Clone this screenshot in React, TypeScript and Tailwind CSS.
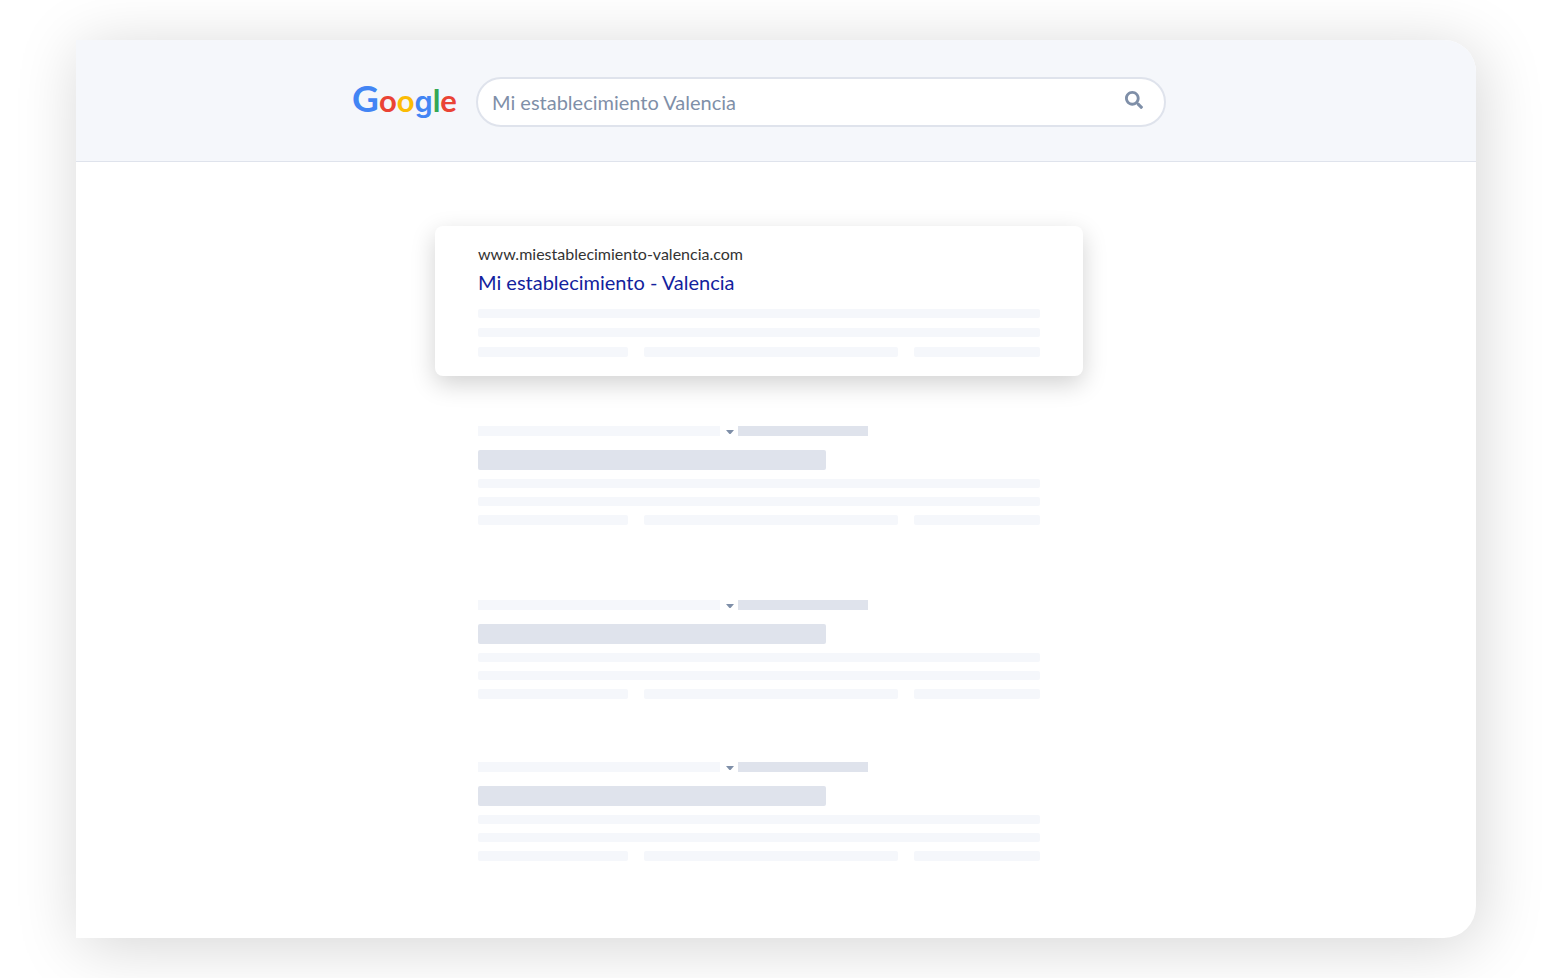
import React from "react";
import { FaSearch } from "react-icons/fa";

// Placeholder results under the highlighted one
const RESULTS = [
    { id: 1, spacing: "mt-[50px]" },
    { id: 2, spacing: "mt-[75px]" },
    { id: 3, spacing: "mt-[63px]" },
];

function Logo() {
    return (
        <a
            href="#"
            aria-label="Google"
            className="flex items-baseline shrink-0 w-[102px] pb-1 font-bold text-[31px] leading-10"
        >
            <span className="text-[37px] text-[#4285f4]">G</span>
            <span className="text-[#ea4335]">o</span>
            <span className="text-[#fbbc05]">o</span>
            {/* Single-storey g */}
            <span className="font-['Inter',sans-serif] font-semibold text-[29px] text-[#4285f4]">g</span>
            <span className="text-[#34a853]">l</span>
            <span className="text-[#ea4335]">e</span>
        </a>
    );
}

function SearchBar() {
    return (
        <form
            className="flex flex-1 min-w-0 items-center h-[50px] pl-[14px] pr-[21px] bg-white border-2 border-[#dfe3ec] rounded-full"
            onSubmit={(e) => e.preventDefault()}
        >
            <input
                type="text"
                aria-label="Buscar"
                defaultValue="Mi establecimiento Valencia"
                className="flex-1 min-w-0 h-full bg-transparent text-xl text-[#7f8fa8] outline-none"
            />
            <button type="submit" aria-label="Buscar" className="pb-1 text-[#7f8fa8]">
                <FaSearch className="w-[18px] h-[18px]" />
            </button>
        </form>
    );
}

function TextLines({ gap = "gap-[9px]" }: { gap?: string }) {
    return (
        <div className={`flex flex-col ${gap}`}>
            <div className="h-[9px] rounded-xs bg-[#f5f7fb]" />
            <div className="h-[9px] rounded-xs bg-[#f5f7fb]" />
            <div className="flex gap-4">
                <div className="w-[150px] h-[10px] rounded-xs bg-[#f5f7fb]" />
                <div className="flex-1 h-[10px] rounded-xs bg-[#f5f7fb]" />
                <div className="w-[126px] h-[10px] rounded-xs bg-[#f5f7fb]" />
            </div>
        </div>
    );
}

function FeaturedResult() {
    return (
        <article className="px-[43px] pt-4 pb-[19px] bg-white rounded-lg shadow-[0_8px_24px_rgba(0,0,0,0.18)]">
            <p className="text-base leading-6 text-[#333333]">www.miestablecimiento-valencia.com</p>
            <h2 className="mt-0.5 mb-[13px] text-xl leading-7 text-[#12229d]">
                <a href="#">Mi establecimiento - Valencia</a>
            </h2>
            <TextLines gap="gap-[10px]" />
        </article>
    );
}

function PlaceholderResult({ spacing }: { spacing: string }) {
    return (
        <article className={`mx-[43px] ${spacing}`}>
            <div className="flex items-center">
                <div className="w-[242px] h-[10px] bg-[#f5f7fb]" />
                <svg viewBox="0 0 8 4" className="ml-1.5 mr-1 mt-[2px] w-2 h-1" aria-hidden="true">
                    <path d="M0 0h8L5 3.4Q4 4.4 3 3.4Z" fill="#7f8fa8" />
                </svg>
                <div className="w-[130px] h-[10px] bg-[#dfe3ec]" />
            </div>
            <div className="mt-[14px] mb-[9px] w-[348px] h-5 rounded-xs bg-[#dfe3ec]" />
            <TextLines />
        </article>
    );
}

export default function App() {
    return (
        <div className="flex min-h-screen pl-[76px] pr-[85px] py-10 bg-white font-['Lato',sans-serif]">
            <div className="flex-1 min-w-0 bg-white rounded-r-[32px] shadow-[4px_8px_64px_rgba(0,0,0,0.17)]">
                {/* Header */}
                <header className="pt-[37px] pb-[34px] pr-[34px] bg-[#f5f7fb] border-b border-[#dfe3ec] rounded-tr-[32px]">
                    <div className="flex items-center gap-[22px] max-w-[814px] mx-auto">
                        <Logo />
                        <SearchBar />
                    </div>
                </header>

                {/* Results */}
                <main className="pt-16 pb-[77px] pr-[34px]">
                    <div className="max-w-[648px] mx-auto">
                        <FeaturedResult />
                        {RESULTS.map((result) => (
                            <PlaceholderResult key={result.id} spacing={result.spacing} />
                        ))}
                    </div>
                </main>
            </div>
        </div>
    );
}
